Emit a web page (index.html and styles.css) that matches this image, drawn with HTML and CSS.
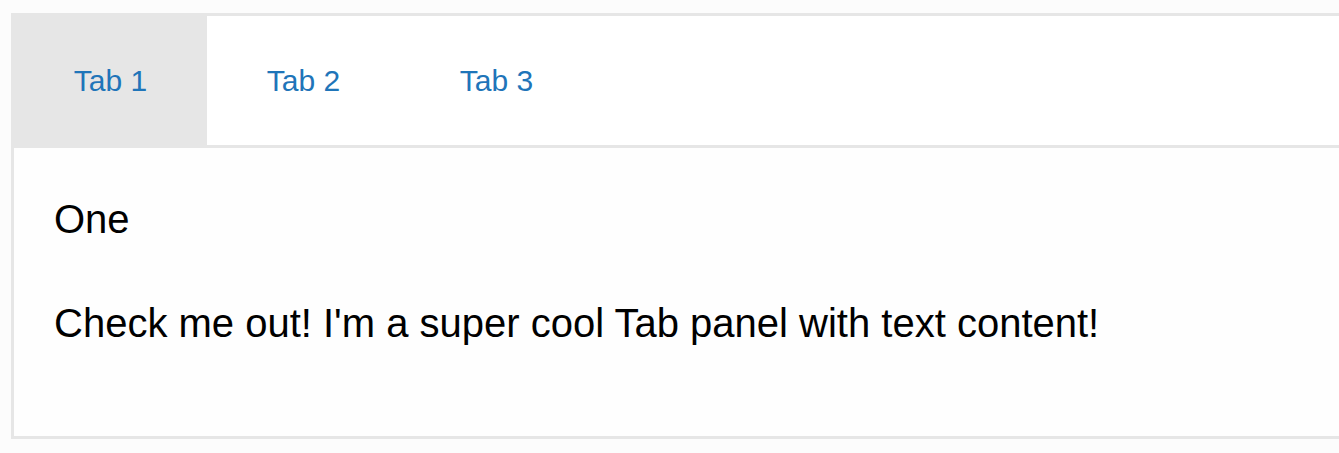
FILE: index.html
```html
<!DOCTYPE html>
<html>
<head>
<meta charset="utf-8">
<link rel="stylesheet" href="styles.css">
</head>
<body>
<div class="tabs">
  <div class="tablist">
    <div class="tab selected">Tab 1</div>
    <div class="tab">Tab 2</div>
    <div class="tab">Tab 3</div>
  </div>
  <div class="panel">
    <p class="line">One</p>
    <p class="line">Check me out! I'm a super cool Tab panel with text content!</p>
  </div>
</div>
</body>
</html>
```
FILE: styles.css
```css
html, body {
  margin: 0;
  overflow: hidden;
  background: #fcfcfc;
}
body {
  padding: 13px 0 0 11px;
  font-family: "Liberation Sans", Arial, sans-serif;
}
.tabs {
  width: 1340px;
  border: 3px solid #e6e6e6;
  border-right: none;
}
.tablist {
  display: flex;
  height: 129px;
  background: #ffffff;
  border-bottom: 3px solid #e6e6e6;
}
.tab {
  width: 193px;
  display: flex;
  align-items: center;
  justify-content: center;
  font-size: 30px;
  color: #1f75b9;
}
.tab.selected {
  background: #e6e6e6;
}
.panel {
  background: #fefefe;
  padding: 48px 40px 90px;
  display: flex;
  flex-direction: column;
  gap: 58px;
}
.line {
  margin: 0;
  font-size: 40px;
  line-height: 46px;
  color: #000;
}
```
